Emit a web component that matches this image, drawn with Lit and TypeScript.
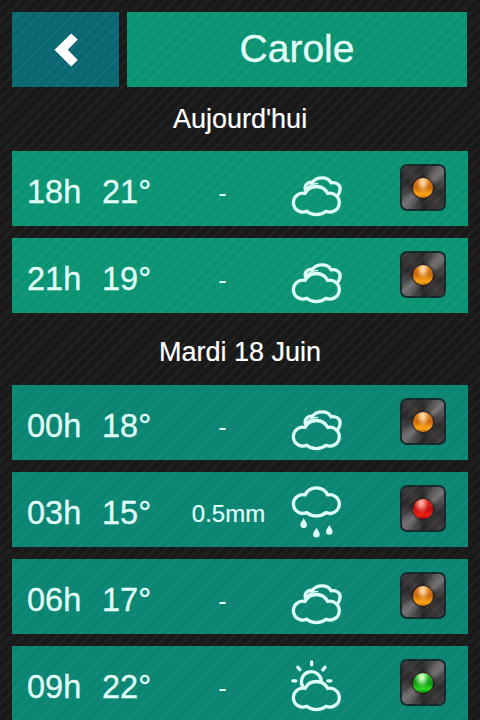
import { LitElement, html, svg, css } from "lit";
import { customElement } from "lit/decorators.js";

type Sky = "cloudy" | "rain" | "sun";
type Level = "amber" | "red" | "green";
interface Slot { hour: string; temp: string; rain: string; sky: Sky; level: Level }

const days: { title: string; tone: string; slots: Slot[] }[] = [
  { title: "Aujourd'hui", tone: "today", slots: [
    { hour: "18h", temp: "21°", rain: "-", sky: "cloudy", level: "amber" },
    { hour: "21h", temp: "19°", rain: "-", sky: "cloudy", level: "amber" },
  ] },
  { title: "Mardi 18 Juin", tone: "later", slots: [
    { hour: "00h", temp: "18°", rain: "-", sky: "cloudy", level: "amber" },
    { hour: "03h", temp: "15°", rain: "0.5mm", sky: "rain", level: "red" },
    { hour: "06h", temp: "17°", rain: "-", sky: "cloudy", level: "amber" },
    { hour: "09h", temp: "22°", rain: "-", sky: "sun", level: "green" },
  ] },
];

const CLOUD = "M15 23.500A12.700 12.700 0 0 1 37.700 23.500A9.400 9.400 0 1 1 36 41.200A15.500 15.500 0 0 1 16.700 41.200A9.400 9.400 0 1 1 15 23.500Z";

const skies = {
  cloudy: svg`
    <path d=${CLOUD} />
    <path d="M15.300 19.500C14.300 14.500 18.500 11.800 22.500 12.300C26.500 6.500 38 6 41 12.800C46.500 11.800 51 15.500 50 20C49.800 22 49.200 23.500 48 25" />
    <path class="thin" d="M17 18C20 14.800 23.500 13.500 27.500 13.500" />`,
  rain: svg`
    <g transform="translate(0 -19.600)"><path d=${CLOUD} /></g>
    <path class="fill" d="M13.700 27c1 3 3.300 4.300 3.300 6.700a3.300 3.300 0 0 1-6.600 0c0-2.400 2.300-3.700 3.300-6.700ZM26.400 36.500c1 3 3.300 4.300 3.300 6.700a3.300 3.300 0 0 1-6.600 0c0-2.400 2.300-3.700 3.300-6.700ZM39.300 33.700c1 3 3.300 4.300 3.300 6.700a3.300 3.300 0 0 1-6.600 0c0-2.400 2.300-3.700 3.300-6.700Z" />`,
  sun: svg`
    <path d=${CLOUD} />
    <path d="M12.600 21.500A10 10 0 1 1 31.300 15.500" />
    <path d="M21.600-3.200v3M7.800 2.300l2.100 2.500M35 2.300l-2.200 2.500M2.800 15.800h3M37.800 15.800h3" />`,
};

@customElement("app-root")
export class AppRoot extends LitElement {
  static styles = css`
    :host {
      display: block;
      position: relative;
      height: 720px;
      overflow: hidden;
      background: #191919;
      color: #fff;
      font-family: "Liberation Sans", Arial, sans-serif;
    }
    .texture {
      position: absolute;
      inset: 0;
      width: 100%;
      height: 100%;
      pointer-events: none;
    }
    main { display: flex; flex-direction: column; padding: 12px 12px 0; }
    header { display: flex; gap: 8px; height: 75px; padding-right: 1px; }
    .back { width: 107px; background: #0a6873; display: grid; place-items: center; }
    .back svg { fill: #fff; }
    h1 {
      flex: 1; margin: 0; background: #0b9473; color: #e2fff8;
      font-size: 39px; line-height: 73px; font-weight: 400; text-align: center;
      -webkit-text-stroke: 0.3px;
    }
    h2 {
      margin: 0; height: 64px; line-height: 64px;
      font-size: 27px; font-weight: 400; text-align: center;
      -webkit-text-stroke: 0.2px;
    }
    .later h2 { height: 72px; line-height: 79px; }
    .slots { display: flex; flex-direction: column; gap: 12px; }
    .slot {
      display: grid;
      grid-template-columns: 15px 75px 74px 93px 21px 60px 1fr 46px 22px;
      height: 75px;
      color: #e0fff8;
    }
    .today .slot { background: #0b9473; }
    .later .slot { background: #0a8673; }
    .hour, .temp { font-size: 32.5px; line-height: 82px; white-space: nowrap; -webkit-text-stroke: 0.3px; }
    .hour { grid-column: 2; }
    .temp { grid-column: 3; }
    .rain { grid-column: 4; font-size: 24px; line-height: 83px; text-align: center; -webkit-text-stroke: 0.2px; }
    .rain.amount { padding-left: 12px; }
    .sky {
      grid-column: 6; margin-top: 19px; width: 60px; height: 56px; overflow: visible;
      fill: none; stroke: #dcfff8; stroke-width: 3.3; stroke-linecap: round; stroke-linejoin: round;
    }
    .sky .fill { fill: #dcfff8; stroke: none; }
    .sky .thin { stroke-width: 1.7; }
    .lamp {
      grid-column: 8; margin-top: 13px; box-sizing: border-box; width: 46px; height: 47px;
      border: 2px solid #14282a; border-radius: 7px; display: grid; place-items: center;
      background: conic-gradient(from 0deg, #2b2829, #454243 20deg, #757273 48deg, #454243 75deg, #2d2a2b 105deg, #3b3839 140deg, #262425 180deg, #454243 200deg, #757273 228deg, #434041 255deg, #2b2829 285deg, #3b3839 320deg, #2b2829);
    }
    .bulb { width: 20px; height: 20px; border-radius: 50%; box-shadow: 0 0 2px 1px #231b18; }
    .amber { background: radial-gradient(ellipse at 50% 20%, #ffd7a0 0 8%, transparent 46%), linear-gradient(#e07d1c, #c96504 48%, #fca414 80%, #c87408); }
    .red { background: radial-gradient(ellipse at 42% 22%, #ffb0a4 0 5%, transparent 44%), linear-gradient(#e0231c, #c40b08 50%, #ee1c12 80%, #a90c08); }
    .green { background: radial-gradient(ellipse at 45% 22%, #c8ffc0 0 8%, transparent 46%), linear-gradient(#2fbf2a, #0a960c 50%, #27d91e 80%, #0b850d); }
  `;

  render() {
    return html`
      <main>
        <header>
          <div class="back">
            <svg width="26" height="36" viewBox="0 0 26 36">
              <path d="M1.500 17.800L18.200 1.400L24.800 7.600L14.800 17.800L24.800 28L18.200 34.400Z" />
            </svg>
          </div>
          <h1>Carole</h1>
        </header>
        ${days.map((day) => html`
          <section class=${day.tone}>
            <h2>${day.title}</h2>
            <div class="slots">
              ${day.slots.map((s) => html`
                <div class="slot">
                  <span class="hour">${s.hour}</span>
                  <span class="temp">${s.temp}</span>
                  <span class="rain ${s.rain === "-" ? "" : "amount"}">${s.rain}</span>
                  <svg class="sky" viewBox="0 0 60 56">${skies[s.sky]}</svg>
                  <div class="lamp"><i class="bulb ${s.level}"></i></div>
                </div>`)}
            </div>
          </section>`)}
      </main>
      <svg class="texture">
        <defs>
          <pattern id="lines" width="11" height="11" patternUnits="userSpaceOnUse">
            <path d="M-2 13L13-2M-2 2L2-2M9 13L13 9" stroke="#fff" stroke-opacity="0.04" stroke-width="2" />
          </pattern>
        </defs>
        <rect width="100%" height="100%" fill="url(#lines)" />
      </svg>`;
  }
}
